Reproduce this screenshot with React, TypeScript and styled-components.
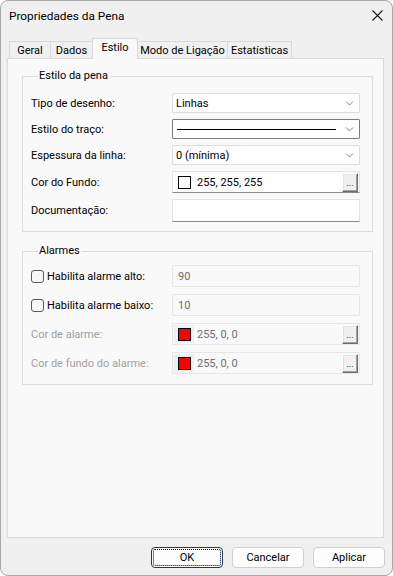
import React from "react";
import styled, { createGlobalStyle, css } from "styled-components";

const Global = createGlobalStyle`
  html, body { margin: 0; padding: 0; background: #ffffff; }
  * { box-sizing: border-box; }
`;

const FONT = `Roboto, "Segoe UI", "Liberation Sans", sans-serif`;

const Window = styled.div`
  width: 393px;
  height: 576px;
  border: 1px solid #a8a8a8;
  border-radius: 8px;
  background: #f0f0f0;
  display: flex;
  flex-direction: column;
  overflow: hidden;
  font-family: ${FONT};
  font-size: 11px;
  color: #000;
`;

const TitleBar = styled.div`
  height: 30px;
  flex: none;
  display: flex;
  align-items: center;
  justify-content: space-between;
  padding: 0 9px 0 8px;
  font-size: 11.8px;
`;

const CloseBtn = styled.div`
  width: 12px;
  height: 12px;
  display: flex;
  align-items: center;
  justify-content: center;
  margin-top: -2px;
`;

const Body = styled.div`
  flex: 1;
  display: flex;
  flex-direction: column;
  padding: 7px 8px 0 6px;
  min-height: 0;
`;

const TabStrip = styled.div`
  display: flex;
  align-items: flex-end;
  height: 21px;
  padding-left: 3px;
  margin-bottom: -1px;
  position: relative;
  z-index: 1;
`;

const Tab = styled.div<{ $w: number; $active?: boolean }>`
  width: ${(p) => p.$w}px;
  margin-left: -1px;
  border: 1px solid #d9d9d9;
  border-bottom: none;
  display: flex;
  align-items: center;
  justify-content: center;
  white-space: nowrap;
  ${(p) =>
    p.$active
      ? css`
          height: 21px;
          background: #f9f9f9;
          position: relative;
          z-index: 2;
          padding-bottom: 3px;
        `
      : css`
          height: 17px;
          margin-bottom: 1px;
          background: #f0f0f0;
          padding-top: 1px;
        `}
`;

const Panel = styled.div`
  flex: 1;
  border: 1px solid #dadada;
  background: #f9f9f9;
  padding: 9px 10px 0 14px;
  display: flex;
  flex-direction: column;
`;

const Group = styled.fieldset<{ $mt?: number; $pb: number }>`
  margin: ${(p) => p.$mt ?? 0}px 0 0 0;
  border: 1px solid #dcdcdc;
  padding: 0 12px ${(p) => p.$pb}px 8px;
  min-width: 0;
`;

const Legend = styled.legend`
  margin-left: 7px;
  padding: 0 2px 0 1px;
  line-height: 16px;
`;

const Rows = styled.div<{ $gap: number; $mt: number }>`
  display: flex;
  flex-direction: column;
  gap: ${(p) => p.$gap}px;
  margin-top: ${(p) => p.$mt}px;
`;

const Row = styled.div<{ $h: number }>`
  display: grid;
  grid-template-columns: 141px 1fr;
  align-items: center;
  height: ${(p) => p.$h}px;
`;

const Label = styled.span<{ $disabled?: boolean }>`
  color: ${(p) => (p.$disabled ? "#a0a0a0" : "#000")};
  white-space: nowrap;
`;

const CheckLabel = styled.label`
  display: flex;
  align-items: center;
  gap: 3px;
  white-space: nowrap;
`;

const CheckBox = styled.span`
  width: 13px;
  height: 13px;
  border: 1px solid #5b5b5b;
  border-radius: 3px;
  background: #f7f7f7;
  flex: none;
`;

const Combo = styled.div<{ $focused?: boolean }>`
  height: 100%;
  background: #ffffff;
  border: 1px solid ${(p) => (p.$focused ? "#7d7d7d" : "#dedede")};
  border-radius: 1px;
  display: flex;
  align-items: center;
  padding: 0 5px 0 3px;
  gap: 6px;
`;

const ComboText = styled.span`
  flex: 1;
  white-space: nowrap;
`;

const StrokeLine = styled.span`
  flex: 1;
  height: 1px;
  background: #000;
  margin: 0 3px 0 1px;
`;

const TextBox = styled.div<{ $disabled?: boolean }>`
  height: 100%;
  border: 1px solid ${(p) => (p.$disabled ? "#e6e6e6" : "#e3e3e3")};
  ${(p) =>
    !p.$disabled &&
    css`
      border-bottom-color: #8a8a8a;
    `}
  background: ${(p) => (p.$disabled ? "#f9f9f9" : "#ffffff")};
  color: ${(p) => (p.$disabled ? "#6d6d6d" : "#000")};
  border-radius: 1px;
  display: flex;
  align-items: center;
  padding: 0 1px 0 5px;
`;

const ColorField = styled(TextBox)`
  padding-left: 1px;
  gap: 3px;
`;

const SwatchWell = styled.span<{ $disabled?: boolean }>`
  width: 20px;
  height: 18px;
  display: flex;
  align-items: center;
  justify-content: center;
  background: ${(p) => (p.$disabled ? "#efefef" : "transparent")};
  flex: none;
`;

const Swatch = styled.span<{ $color: string }>`
  width: 13px;
  height: 13px;
  border: 1px solid #000;
  background: ${(p) => p.$color};
`;

const ColorText = styled.span`
  flex: 1;
  white-space: nowrap;
`;

const DotsBtn = styled.span`
  width: 16px;
  height: 19px;
  background: #f0f0f0;
  border-top: 1px solid #ffffff;
  border-left: 1px solid #ffffff;
  border-right: 1px solid #6e6e6e;
  border-bottom: 1px solid #6e6e6e;
  box-shadow: inset -1px -1px 0 #a0a0a0, inset 1px 1px 0 #e3e3e3;
  display: flex;
  align-items: flex-end;
  justify-content: center;
  font-size: 9px;
  line-height: 12px;
  color: #000;
  padding-bottom: 2px;
  flex: none;
`;

const Footer = styled.div`
  height: 37px;
  flex: none;
  display: flex;
  justify-content: flex-end;
  align-items: flex-start;
  padding: 9px 0 0 0;
  margin-right: -1px;
  gap: 9px;
`;

const Button = styled.button<{ $default?: boolean }>`
  width: 72px;
  height: 21px;
  font-family: ${FONT};
  font-size: 11px;
  color: #000;
  background: #fdfdfd;
  border: 1px solid #d0d0d0;
  border-radius: 4px;
  padding: 0;
  ${(p) =>
    p.$default &&
    css`
      border-color: #1c3a63;
      outline: 1px dotted #000;
      outline-offset: -3px;
    `}
`;

const Chevron = () => (
  <svg width="9" height="6" viewBox="0 0 9 6">
    <path d="M1 1.5 L4.5 5 L8 1.5" fill="none" stroke="#858585" strokeWidth="1" />
  </svg>
);

const XIcon = () => (
  <svg width="11" height="11" viewBox="0 0 11 11">
    <path d="M0.5 0.5 L10.5 10.5 M10.5 0.5 L0.5 10.5" stroke="#1b1b1b" strokeWidth="1.1" />
  </svg>
);

export default function App() {
  return (
    <>
      <Global />
      <Window>
        <TitleBar>
          <span>Propriedades da Pena</span>
          <CloseBtn>
            <XIcon />
          </CloseBtn>
        </TitleBar>
        <Body>
          <TabStrip>
            <Tab $w={42}>Geral</Tab>
            <Tab $w={43}>Dados</Tab>
            <Tab $w={46} $active>
              Estilo
            </Tab>
            <Tab $w={91}>Modo de Ligação</Tab>
            <Tab $w={65}>Estatísticas</Tab>
          </TabStrip>
          <Panel>
            <Group $pb={9}>
              <Legend>Estilo da pena</Legend>
              <Rows $gap={6} $mt={9}>
                <Row $h={20}>
                  <Label>Tipo de desenho:</Label>
                  <Combo>
                    <ComboText>Linhas</ComboText>
                    <Chevron />
                  </Combo>
                </Row>
                <Row $h={20}>
                  <Label>Estilo do traço:</Label>
                  <Combo $focused>
                    <StrokeLine />
                    <Chevron />
                  </Combo>
                </Row>
                <Row $h={20}>
                  <Label>Espessura da linha:</Label>
                  <Combo>
                    <ComboText>0 (mínima)</ComboText>
                    <Chevron />
                  </Combo>
                </Row>
                <Row $h={22}>
                  <Label>Cor do Fundo:</Label>
                  <ColorField>
                    <SwatchWell>
                      <Swatch $color="#ffffff" />
                    </SwatchWell>
                    <ColorText>255, 255, 255</ColorText>
                    <DotsBtn>...</DotsBtn>
                  </ColorField>
                </Row>
                <Row $h={23}>
                  <Label>Documentação:</Label>
                  <TextBox />
                </Row>
              </Rows>
            </Group>
            <Group $mt={11} $pb={10}>
              <Legend>Alarmes</Legend>
              <Rows $gap={7} $mt={6}>
                <Row $h={22}>
                  <CheckLabel>
                    <CheckBox />
                    Habilita alarme alto:
                  </CheckLabel>
                  <TextBox $disabled>90</TextBox>
                </Row>
                <Row $h={22}>
                  <CheckLabel>
                    <CheckBox />
                    Habilita alarme baixo:
                  </CheckLabel>
                  <TextBox $disabled>10</TextBox>
                </Row>
                <Row $h={22}>
                  <Label $disabled>Cor de alarme:</Label>
                  <ColorField $disabled>
                    <SwatchWell $disabled>
                      <Swatch $color="#ff0000" />
                    </SwatchWell>
                    <ColorText>255, 0, 0</ColorText>
                    <DotsBtn>...</DotsBtn>
                  </ColorField>
                </Row>
                <Row $h={22}>
                  <Label $disabled>Cor de fundo do alarme:</Label>
                  <ColorField $disabled>
                    <SwatchWell $disabled>
                      <Swatch $color="#ff0000" />
                    </SwatchWell>
                    <ColorText>255, 0, 0</ColorText>
                    <DotsBtn>...</DotsBtn>
                  </ColorField>
                </Row>
              </Rows>
            </Group>
          </Panel>
          <Footer>
            <Button $default>OK</Button>
            <Button>Cancelar</Button>
            <Button>Aplicar</Button>
          </Footer>
        </Body>
      </Window>
    </>
  );
}
